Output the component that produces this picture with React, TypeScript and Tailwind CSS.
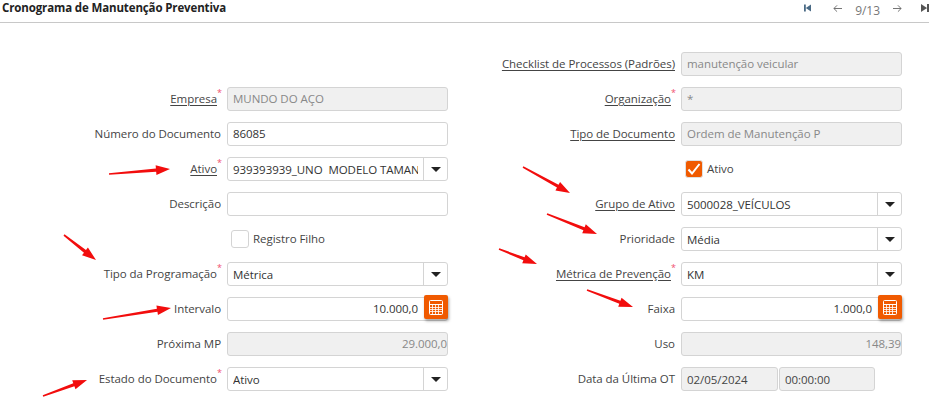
import type { ReactNode } from "react";

function Label({
  text,
  link = false,
  required = false,
}: {
  text: string;
  link?: boolean;
  required?: boolean;
}) {
  return (
    <div className="flex w-[221px] flex-none justify-end pb-[1px] text-[#444]">
      <span className={link ? "underline underline-offset-2" : ""}>{text}</span>
      {required && (
        <span className="mt-[-3px] w-[4px] text-[9px] leading-[12px] text-[#f0506e]">*</span>
      )}
    </div>
  );
}

function Row({ label, children }: { label?: ReactNode; children: ReactNode }) {
  return (
    <div className="flex h-[24px] items-center gap-[6px]">
      {label ?? <div className="w-[221px] flex-none" />}
      {children}
    </div>
  );
}

function TextField({
  value = "",
  disabled = false,
  right = false,
}: {
  value?: string;
  disabled?: boolean;
  right?: boolean;
}) {
  return (
    <div
      className={`flex h-[24px] w-[221px] flex-none items-center overflow-hidden rounded-[3px] border border-[#d4d4d4] ${
        right ? "justify-end" : "px-[5px]"
      } ${disabled ? "bg-[#f0f0f0] text-[#888]" : "bg-white text-[#333]"}`}
    >
      {value}
    </div>
  );
}

function SelectField({ value }: { value: string }) {
  return (
    <div className="flex h-[24px] w-[221px] flex-none rounded-[3px] border border-[#d4d4d4] bg-white text-[#333]">
      <div className="min-w-0 flex-1 px-[5px]">
        <div className="overflow-hidden whitespace-pre leading-[23px]">{value}</div>
      </div>
      <div className="flex w-[24px] flex-none items-center justify-center border-l border-[#d4d4d4]">
        <div className="h-0 w-0 border-x-[5px] border-t-[5px] border-x-transparent border-t-[#222]" />
      </div>
    </div>
  );
}

function CalcIcon() {
  return (
    <svg width="14" height="15" viewBox="0 0 14 15" fill="none" stroke="#fff">
      <rect x="0.5" y="0.5" width="13" height="14" rx="1" />
      <path d="M0.5 4.5H13.5" />
      <path d="M0.5 7.5H13.5M0.5 9.5H13.5M0.5 11.5H13.5M3.5 4.5V14.5M6.5 4.5V14.5M9.5 4.5V14.5" strokeOpacity="0.8" />
    </svg>
  );
}

function NumberField({ value }: { value: string }) {
  return (
    <div className="relative flex h-[24px] w-[221px] flex-none items-center justify-end rounded-[3px] border border-[#d4d4d4] bg-white pr-[29px] text-[#333]">
      {value}
      <div className="absolute right-[-1px] top-[-3px] flex h-[24px] w-[24px] items-center justify-center rounded-[2px] bg-[#f05a00] shadow-[1px_2px_3px_rgba(0,0,0,0.35)]">
        <CalcIcon />
      </div>
    </div>
  );
}

function CheckField({ label, checked = false }: { label: string; checked?: boolean }) {
  return (
    <div className="flex items-center gap-[4px] pl-[4px] text-[#444]">
      {checked ? (
        <div className="flex h-[18px] w-[18px] items-center justify-center rounded-[3px] border border-[#e0e0e0] bg-[#f05a00]">
          <svg width="14" height="12" viewBox="0 0 14 12" fill="none" stroke="#fff" strokeWidth="2">
            <path d="M1.5 6.5L5 10.5L12.5 1" />
          </svg>
        </div>
      ) : (
        <div className="h-[18px] w-[18px] rounded-[3px] border border-[#d4d4d4] bg-white" />
      )}
      <span>{label}</span>
    </div>
  );
}

// tapered red marker, drawn from tail to tip
function Arrow({ from, to }: { from: [number, number]; to: [number, number] }) {
  const dx = to[0] - from[0];
  const dy = to[1] - from[1];
  const len = Math.hypot(dx, dy);
  const ux = dx / len;
  const uy = dy / len;
  const nx = -uy;
  const ny = ux;
  const base: [number, number] = [to[0] - ux * 14, to[1] - uy * 14];
  const at = (p: [number, number], w: number) => `${p[0] + nx * w},${p[1] + ny * w}`;
  const points = [
    at(from, 0.8),
    at(base, 1.6),
    at(base, 4.8),
    `${to[0]},${to[1]}`,
    at(base, -4.8),
    at(base, -1.6),
    at(from, -0.8),
  ].join(" ");
  return <polygon points={points} fill="#f20d0d" />;
}

const arrows: [[number, number], [number, number]][] = [
  [[109, 174], [170, 169]],
  [[64, 235], [96, 260]],
  [[103, 319], [171, 308]],
  [[43, 396], [87, 380]],
  [[523, 167], [570, 193]],
  [[547, 214], [597, 234]],
  [[499, 249], [537, 264]],
  [[587, 290], [633, 307]],
];

export default function App() {
  return (
    <div className="relative h-[420px] w-[929px] overflow-hidden bg-white font-['Open_Sans',sans-serif] text-[11.5px] tracking-[-0.05px]">
      {/* Header */}
      <div className="flex h-[23px] items-center justify-between border-b border-[#c8c8c8] pb-[6px] pl-[2px] text-[#222]">
        <span className="font-bold tracking-[-0.13px]">Cronograma de Manutenção Preventiva</span>
        <div className="flex w-[125px] flex-none items-center text-[#777]">
          <svg width="8" height="8" viewBox="0 0 8 8" fill="#4a6a85">
            <path d="M0 0H2V8H0ZM8 0V8L2 4Z" />
          </svg>
          <svg width="10" height="9" viewBox="0 0 10 9" fill="none" stroke="#666" className="ml-[22px]">
            <path d="M10 4.5H1M4.5 1L1 4.5L4.5 8" />
          </svg>
          <span className="ml-[13px] mt-[5px] text-[12px]">9/13</span>
          <svg width="10" height="9" viewBox="0 0 10 9" fill="none" stroke="#666" className="ml-[13px]">
            <path d="M0 4.5H9M5.5 1L9 4.5L5.5 8" />
          </svg>
          <svg width="8" height="8" viewBox="0 0 8 8" fill="#555" className="ml-[19px] flex-none">
            <path d="M0 0V8L6 4ZM6 0H8V8H6Z" />
          </svg>
        </div>
      </div>

      {/* Form */}
      <div className="grid grid-cols-[454px_475px] pt-[29px]">
        <div className="flex flex-col gap-[11px]">
          <div className="h-[24px]" />
          <Row label={<Label text="Empresa" link required />}>
            <TextField value="MUNDO DO AÇO" disabled />
          </Row>
          <Row label={<Label text="Número do Documento" />}>
            <TextField value="86085" />
          </Row>
          <Row label={<Label text="Ativo" link required />}>
            <SelectField value="939393939_UNO  MODELO TAMANHO" />
          </Row>
          <Row label={<Label text="Descrição" />}>
            <TextField />
          </Row>
          <Row>
            <CheckField label="Registro Filho" />
          </Row>
          <Row label={<Label text="Tipo da Programação" required />}>
            <SelectField value="Métrica" />
          </Row>
          <Row label={<Label text="Intervalo" />}>
            <NumberField value="10.000,0" />
          </Row>
          <Row label={<Label text="Próxima MP" />}>
            <TextField value="29.000,0" disabled right />
          </Row>
          <Row label={<Label text="Estado do Documento" required />}>
            <SelectField value="Ativo" />
          </Row>
        </div>

        <div className="flex flex-col gap-[11px]">
          <Row label={<Label text="Checklist de Processos (Padrões)" link />}>
            <TextField value="manutenção veicular" disabled />
          </Row>
          <Row label={<Label text="Organização" link required />}>
            <TextField value="*" disabled />
          </Row>
          <Row label={<Label text="Tipo de Documento" link />}>
            <TextField value="Ordem de Manutenção P" disabled />
          </Row>
          <Row>
            <CheckField label="Ativo" checked />
          </Row>
          <Row label={<Label text="Grupo de Ativo" link />}>
            <SelectField value="5000028_VEÍCULOS" />
          </Row>
          <Row label={<Label text="Prioridade" />}>
            <SelectField value="Média" />
          </Row>
          <Row label={<Label text="Métrica de Prevenção" link required />}>
            <SelectField value="KM" />
          </Row>
          <Row label={<Label text="Faixa" />}>
            <NumberField value="1.000,0" />
          </Row>
          <Row label={<Label text="Uso" />}>
            <TextField value="148,39" disabled right />
          </Row>
          <Row label={<Label text="Data da Última OT" />}>
            <div className="flex gap-[1px]">
              <div className="h-[24px] w-[97px] rounded-[3px] border border-[#d4d4d4] bg-[#f0f0f0] px-[5px] leading-[23px] text-[#444]">
                02/05/2024
              </div>
              <div className="h-[24px] w-[96px] rounded-[3px] border border-[#d4d4d4] bg-[#f0f0f0] px-[5px] leading-[23px] text-[#444]">
                00:00:00
              </div>
            </div>
          </Row>
        </div>
      </div>

      {/* Red annotation arrows over the form */}
      <svg className="pointer-events-none absolute inset-0" width="929" height="420">
        {arrows.map(([from, to], i) => (
          <Arrow key={i} from={from} to={to} />
        ))}
      </svg>
    </div>
  );
}
